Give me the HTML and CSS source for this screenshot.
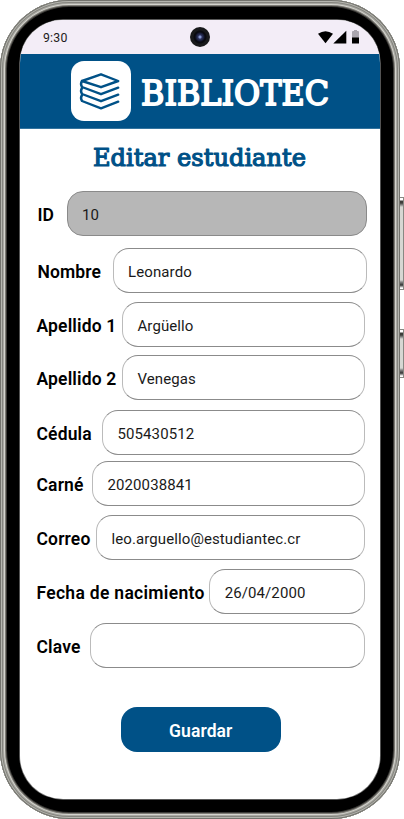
FILE: index.html
```html
<!DOCTYPE html>
<html lang="es">
<head>
<meta charset="utf-8">
<title>Bibliotec - Editar estudiante</title>
<link rel="stylesheet" href="styles.css">
</head>
<body>
<div class="device">
  <span class="side-button volume"></span>
  <span class="side-button power"></span>
  <div class="phone">
    <main class="screen">
      <div class="status">
        <span class="time">9:30</span>
        <span class="camera"></span>
        <svg class="status-icons" width="42" height="16" viewBox="0 0 42 16">
          <path d="M0 3.7Q7.5-1.4 15 3.7L7.5 13.2Z"/>
          <path d="M15.3 13.5 28.3.7V13.5Z"/>
          <path fill="#aaa5af" d="M34 2q0-1 1-1h1V0h3v1h1q1 0 1 1v6h-7Z"/>
          <path d="M34 7.5h7v6h-7Z"/>
        </svg>
      </div>
      <header class="brand">
        <div class="logo">
          <svg width="60" height="60" viewBox="0 0 60 60" fill="none" stroke="#005187" stroke-width="2.4" stroke-linecap="round" stroke-linejoin="round">
            <path d="M11 20 30 13.3 47.2 20 30 26.2Z"/>
            <path d="M11 20q-2 3.2 0 6L30 33.2 47.2 26.7"/>
            <path d="M11 27q-2 3.2 0 6L30 40.2 47.2 33.7"/>
            <path d="M11 34q-2 3.2 0 6L30 47.3 47.2 40.7"/>
          </svg>
        </div>
        <svg class="wordmark" width="200" height="50"><text x="1" y="39.2" textLength="188" lengthAdjust="spacingAndGlyphs">BIBLIOTEC</text></svg>
      </header>
      <svg class="heading" width="220" height="36"><text x="1" y="25.3" textLength="213" lengthAdjust="spacingAndGlyphs">Editar estudiante</text></svg>
      <form class="form">
        <div class="row id"><label>ID</label><div class="field disabled">10</div></div>
        <div class="row nombre"><label>Nombre</label><div class="field">Leonardo</div></div>
        <div class="row ap1"><label>Apellido 1</label><div class="field">Argüello</div></div>
        <div class="row ap2"><label>Apellido 2</label><div class="field">Venegas</div></div>
        <div class="row cedula"><label>Cédula</label><div class="field">505430512</div></div>
        <div class="row carne"><label>Carné</label><div class="field">2020038841</div></div>
        <div class="row correo"><label>Correo</label><div class="field">leo.arguello@estudiantec.cr</div></div>
        <div class="row fecha"><label>Fecha de nacimiento</label><div class="field">26/04/2000</div></div>
        <div class="row clave"><label>Clave</label><div class="field"></div></div>
        <button type="button" class="save">Guardar</button>
      </form>
    </main>
  </div>
</div>
</body>
</html>
```
FILE: styles.css
```css
* { box-sizing: border-box; }
body { margin: 0; background: #fff; font-family: Roboto, sans-serif; color: #000; overflow: hidden; }
.device { position: relative; width: 404px; height: 819px; }
.phone {
  position: relative; width: 400px; height: 819px; padding: 20px 19.6px 20px 20.4px;
  border-radius: 69px; background: #000;
  box-shadow: inset 0 0 0 1px #73736d, inset 0 0 0 2px #b5b5af, inset 0 0 0 3px #85857f,
    inset 0 0 0 4px #aaa9a3, inset 0 0 0 5px #d3d3cd, inset 0 0 0 6px #7d7b75, inset 0 0 0 7px #3b3a37;
}
.side-button {
  position: absolute; right: 0; width: 6px; border: 1px solid #888883;
  background: linear-gradient(#fff 0 2px, #3c3c39 3px 5px, #888 7px, #d7d7d3 9px calc(100% - 9px), #888 calc(100% - 7px), #333 calc(100% - 4px), #fff calc(100% - 1px));
}
.volume { top: 197px; height: 93px; }
.power { top: 329px; height: 49px; }
.screen { width: 360px; height: 779px; border-radius: 43px; overflow: hidden; background: #fff; box-shadow: 0 0 0 .7px #777; }
.status { height: 34px; background: #f3edf7; display: grid; grid-template-columns: 1fr 20px 1fr; align-items: center; }
.time { padding-left: 22.5px; padding-top: 1px; font-size: 12.3px; letter-spacing: .25px; color: #1d1b20; }
.camera { width: 20px; height: 20px; border-radius: 50%; background: radial-gradient(circle, #8798d0 0 1px, #303761 2px, #151832 4px, #090a10 5px 6px, #18191b 7px); }
.status-icons { justify-self: end; margin-right: 20px; margin-top: 1px; }
.brand { height: 75px; border-bottom: 1px solid #33749f; background: #005187; display: flex; align-items: center; gap: 9px; padding-left: 51px; }
.logo { width: 60px; height: 60px; border-radius: 13px; background: #fff; }
.logo svg { display: block; }
text { font-family: "Roboto Slab", "DejaVu Serif", serif; font-weight: 400; stroke-linejoin: round; }
.wordmark { font-size: 33px; fill: #fff; stroke: #fff; stroke-width: 1.8px; overflow: visible; }
.heading { display: block; margin: 12px 0 0 72px; font-size: 24px; fill: #005187; stroke: #005187; stroke-width: 1.2px; overflow: visible; }
.form { padding: 14px 15.3px 0 16.1px; display: flex; flex-direction: column; }
.row { height: 45px; display: flex; align-items: center; margin-bottom: 9px; }
label { flex: none; font-weight: 600; font-size: 17.5px; letter-spacing: .15px; padding-top: 2px; white-space: nowrap; }
.field { flex: 1; height: 45px; border: 1px solid #8b8b8b; border-left-color: #bbb; border-right-color: #bbb; border-radius: 16px; padding: 2px 14.5px 0; font-size: 15px; line-height: 42px; letter-spacing: .1px; color: #1a1a1a; white-space: nowrap; }
.disabled { background: #b7b7b7; border-color: #8a8a8a; }
.id, .nombre { margin-right: -2px; padding-left: .9px; }
.id { margin-bottom: 12px; }
.id label { width: 29.2px; }
.nombre label { width: 75.2px; }
.ap1 { margin-bottom: 8px; }
.ap1 label, .ap2 label { width: 85.5px; }
.ap2 { margin-bottom: 10px; }
.cedula { margin-bottom: 6px; }
.cedula label { width: 65.5px; }
.carne label { width: 55.5px; }
.correo label { width: 59.5px; }
.fecha label { width: 172.7px; letter-spacing: .3px; }
.clave { margin-bottom: 39px; }
.clave label { width: 53.5px; }
.save { align-self: center; width: 160px; height: 45px; border: 0; border-radius: 16px; background: #005187; color: #fff; font: 600 17.5px Roboto, sans-serif; letter-spacing: .1px; padding: 2px 0 0; }
```
